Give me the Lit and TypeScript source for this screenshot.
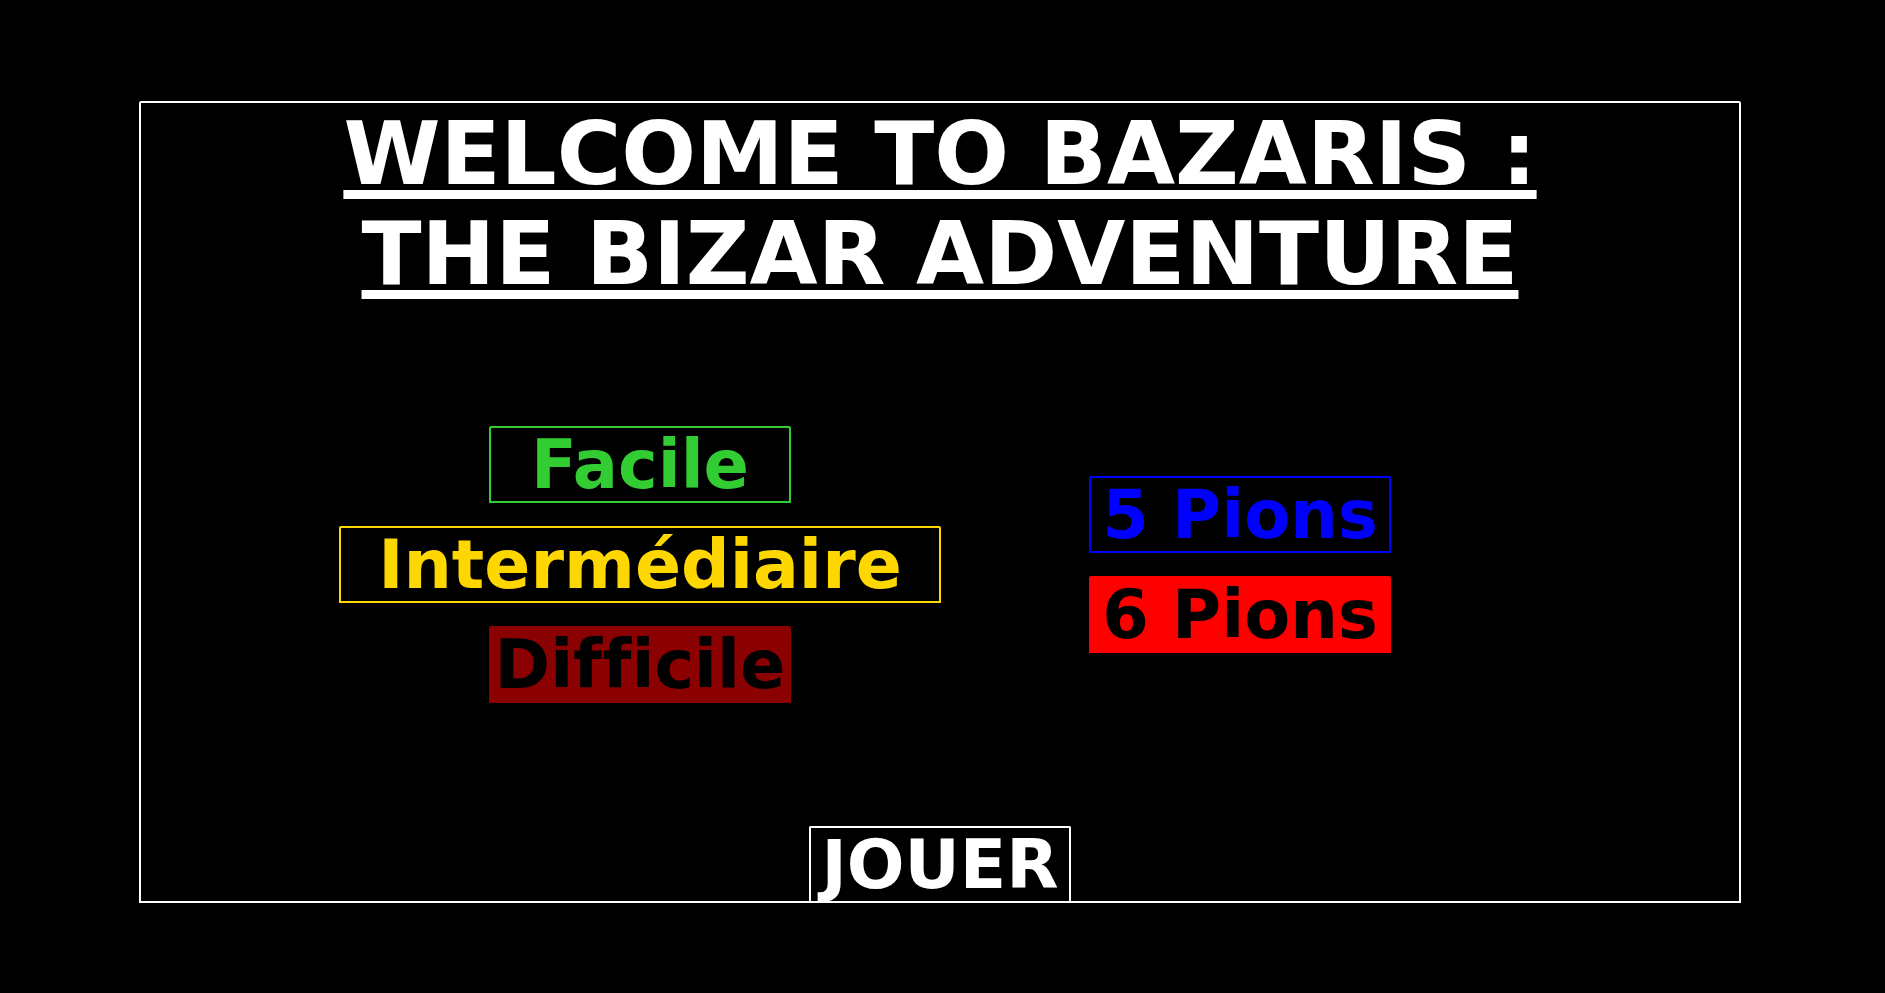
import { LitElement, html, css } from "lit";
import { customElement, state } from "lit/decorators.js";

@customElement("app-root")
export class AppRoot extends LitElement {
  @state() private level = "hard";
  @state() private pawns = 6;

  static styles = css`
    :host {
      display: flex;
      flex-direction: column;
      align-items: center;
      justify-content: center;
      box-sizing: border-box;
      min-height: 100vh;
      padding: 101px 144px 90px 139px;
      background: #000;
      color: #fff;
      font-family: Verdana, "DejaVu Sans", sans-serif;
      font-weight: 700;
      font-variant-ligatures: none;
    }
    .board {
      display: flex;
      flex-direction: column;
      flex: 1;
      align-items: center;
      align-self: stretch;
      border: 2px solid #fff;
      border-radius: 2px 2px 0 0;
    }
    h1 {
      margin: 0;
      padding-top: 1px;
      font-size: 88px;
      line-height: 100px;
      text-align: center;
      text-decoration: underline;
      text-decoration-thickness: 9px;
      text-underline-offset: 6px;
      text-decoration-skip-ink: none;
    }
    h1 span { display: block; }
    .choices {
      flex: 1;
      display: grid;
      grid-template-columns: 600px 600px;
      align-items: center;
      padding-bottom: 1px;
    }
    .group {
      display: flex;
      flex-direction: column;
      align-items: center;
      gap: 23px;
    }
    button {
      box-sizing: border-box;
      height: 77px;
      width: 302px;
      padding: 0;
      border: 2px solid var(--tone);
      border-radius: 2px 2px 0 0;
      background: transparent;
      color: var(--tone);
      font: inherit;
      font-variant-ligatures: none;
      font-size: 67px;
      line-height: 74px;
      white-space: nowrap;
    }
    button[aria-pressed="true"] { background: var(--tone); color: #000; }
    .easy { --tone: limegreen; }
    .medium { --tone: gold; width: 602px; font-size: 68px; }
    .hard { --tone: darkred; }
    .five { --tone: blue; }
    .six { --tone: red; }
    .play { --tone: #fff; width: 262px; height: 75px; border-bottom: 0; font-size: 68px; }
  `;

  private levelButton(id: string, label: string) {
    return html`<button class=${id} aria-pressed=${this.level === id} @click=${() => (this.level = id)}>${label}</button>`;
  }

  private pawnButton(count: number, tone: string) {
    return html`<button class=${tone} aria-pressed=${this.pawns === count} @click=${() => (this.pawns = count)}>${count} Pions</button>`;
  }

  render() {
    return html`
      <main class="board">
        <h1><span>WELCOME TO BAZARIS :</span><span>THE BIZAR ADVENTURE</span></h1>
        <div class="choices">
          <div class="group">
            ${this.levelButton("easy", "Facile")}
            ${this.levelButton("medium", "Intermédiaire")}
            ${this.levelButton("hard", "Difficile")}
          </div>
          <div class="group">
            ${this.pawnButton(5, "five")}
            ${this.pawnButton(6, "six")}
          </div>
        </div>
        <button class="play">JOUER</button>
      </main>
    `;
  }
}
